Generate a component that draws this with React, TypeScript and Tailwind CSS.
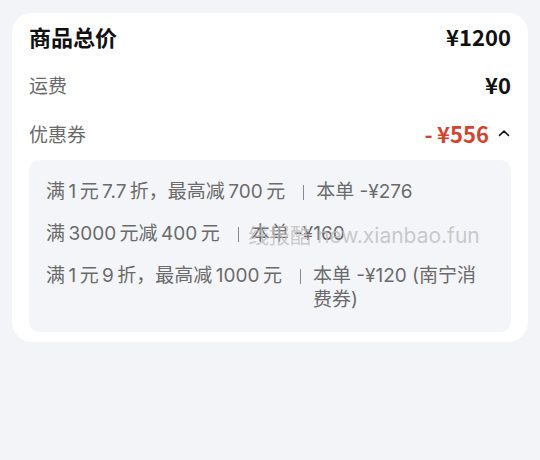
import React from "react";

interface Coupon {
    rule: string;
    detail: string;
}

const coupons: Coupon[] = [
    { rule: "满\u20091\u2009元\u20097.7\u2009折，最高减\u2009700\u2009元", detail: "本单 -¥276" },
    { rule: "满\u20093000\u2009元减\u2009400\u2009元", detail: "本单 -¥160" },
    { rule: "满\u20091\u2009元\u20099\u2009折，最高减\u20091000\u2009元", detail: "本单 -¥120 (南宁消费券)" },
];

const font = { fontFamily: '"Noto Sans CJK SC", "Noto Sans", sans-serif' };
const mixFont = { fontFamily: 'Inter, "Noto Sans CJK SC", sans-serif' };

const ChevronUp: React.FC = () => (
    <svg width="14" height="14" viewBox="0 0 14 14" fill="none" className="ml-2">
        <path d="M2.5 9.5L7 5l4.5 4.5" stroke="#111" strokeWidth="1.6" strokeLinecap="round" strokeLinejoin="round" />
    </svg>
);

export default function App() {
    return (
        <div className="w-[540px] h-[460px] bg-[#f3f4f8] pt-[13px] px-3" style={font}>
            <div className="relative bg-white rounded-[20px] px-[17px] pb-[10px]">
                <div className="flex items-center justify-between h-[46px] leading-none">
                    <span className="text-[22px] font-bold text-[#111]">商品总价</span>
                    <span className="text-[22px] font-bold text-[#111]">¥1200</span>
                </div>
                <div className="flex items-center justify-between h-[50px] leading-none">
                    <span className="text-[19px] text-[#6b6b6b]">运费</span>
                    <span className="text-[22px] font-bold text-[#111]">¥0</span>
                </div>
                <div className="flex items-center justify-between h-[48px] leading-none">
                    <span className="text-[19px] text-[#6b6b6b]">优惠券</span>
                    <span className="flex items-center">
                        <span className="text-[22px] font-bold text-[#d6432c]">-&thinsp;¥556</span>
                        <ChevronUp />
                    </span>
                </div>

                <div
                    className="mt-[3px] bg-[#f4f5f9] rounded-[10px] pl-[17px] pr-[20px] pt-[20px] pb-[20px] flex flex-col gap-[18px]"
                    style={mixFont}
                >
                    {coupons.map((c) => (
                        <div key={c.rule} className="flex items-start text-[19px] leading-[24px] text-[#6b6b6b]">
                            <span className="shrink-0">{c.rule}</span>
                            <span className="shrink-0 w-[1px] h-[15px] mt-[5px] ml-[18px] mr-[12px] bg-[#8a8a8a]" />
                            <span>{c.detail}</span>
                        </div>
                    ))}
                </div>

                {/* 水印 */}
                <div
                    className="absolute left-[236px] top-[211px] text-[21px] leading-[24px] text-[#bdbdbd]/80 pointer-events-none"
                    style={mixFont}
                >
                    线报酷 new.xianbao.fun
                </div>
            </div>
        </div>
    );
}
